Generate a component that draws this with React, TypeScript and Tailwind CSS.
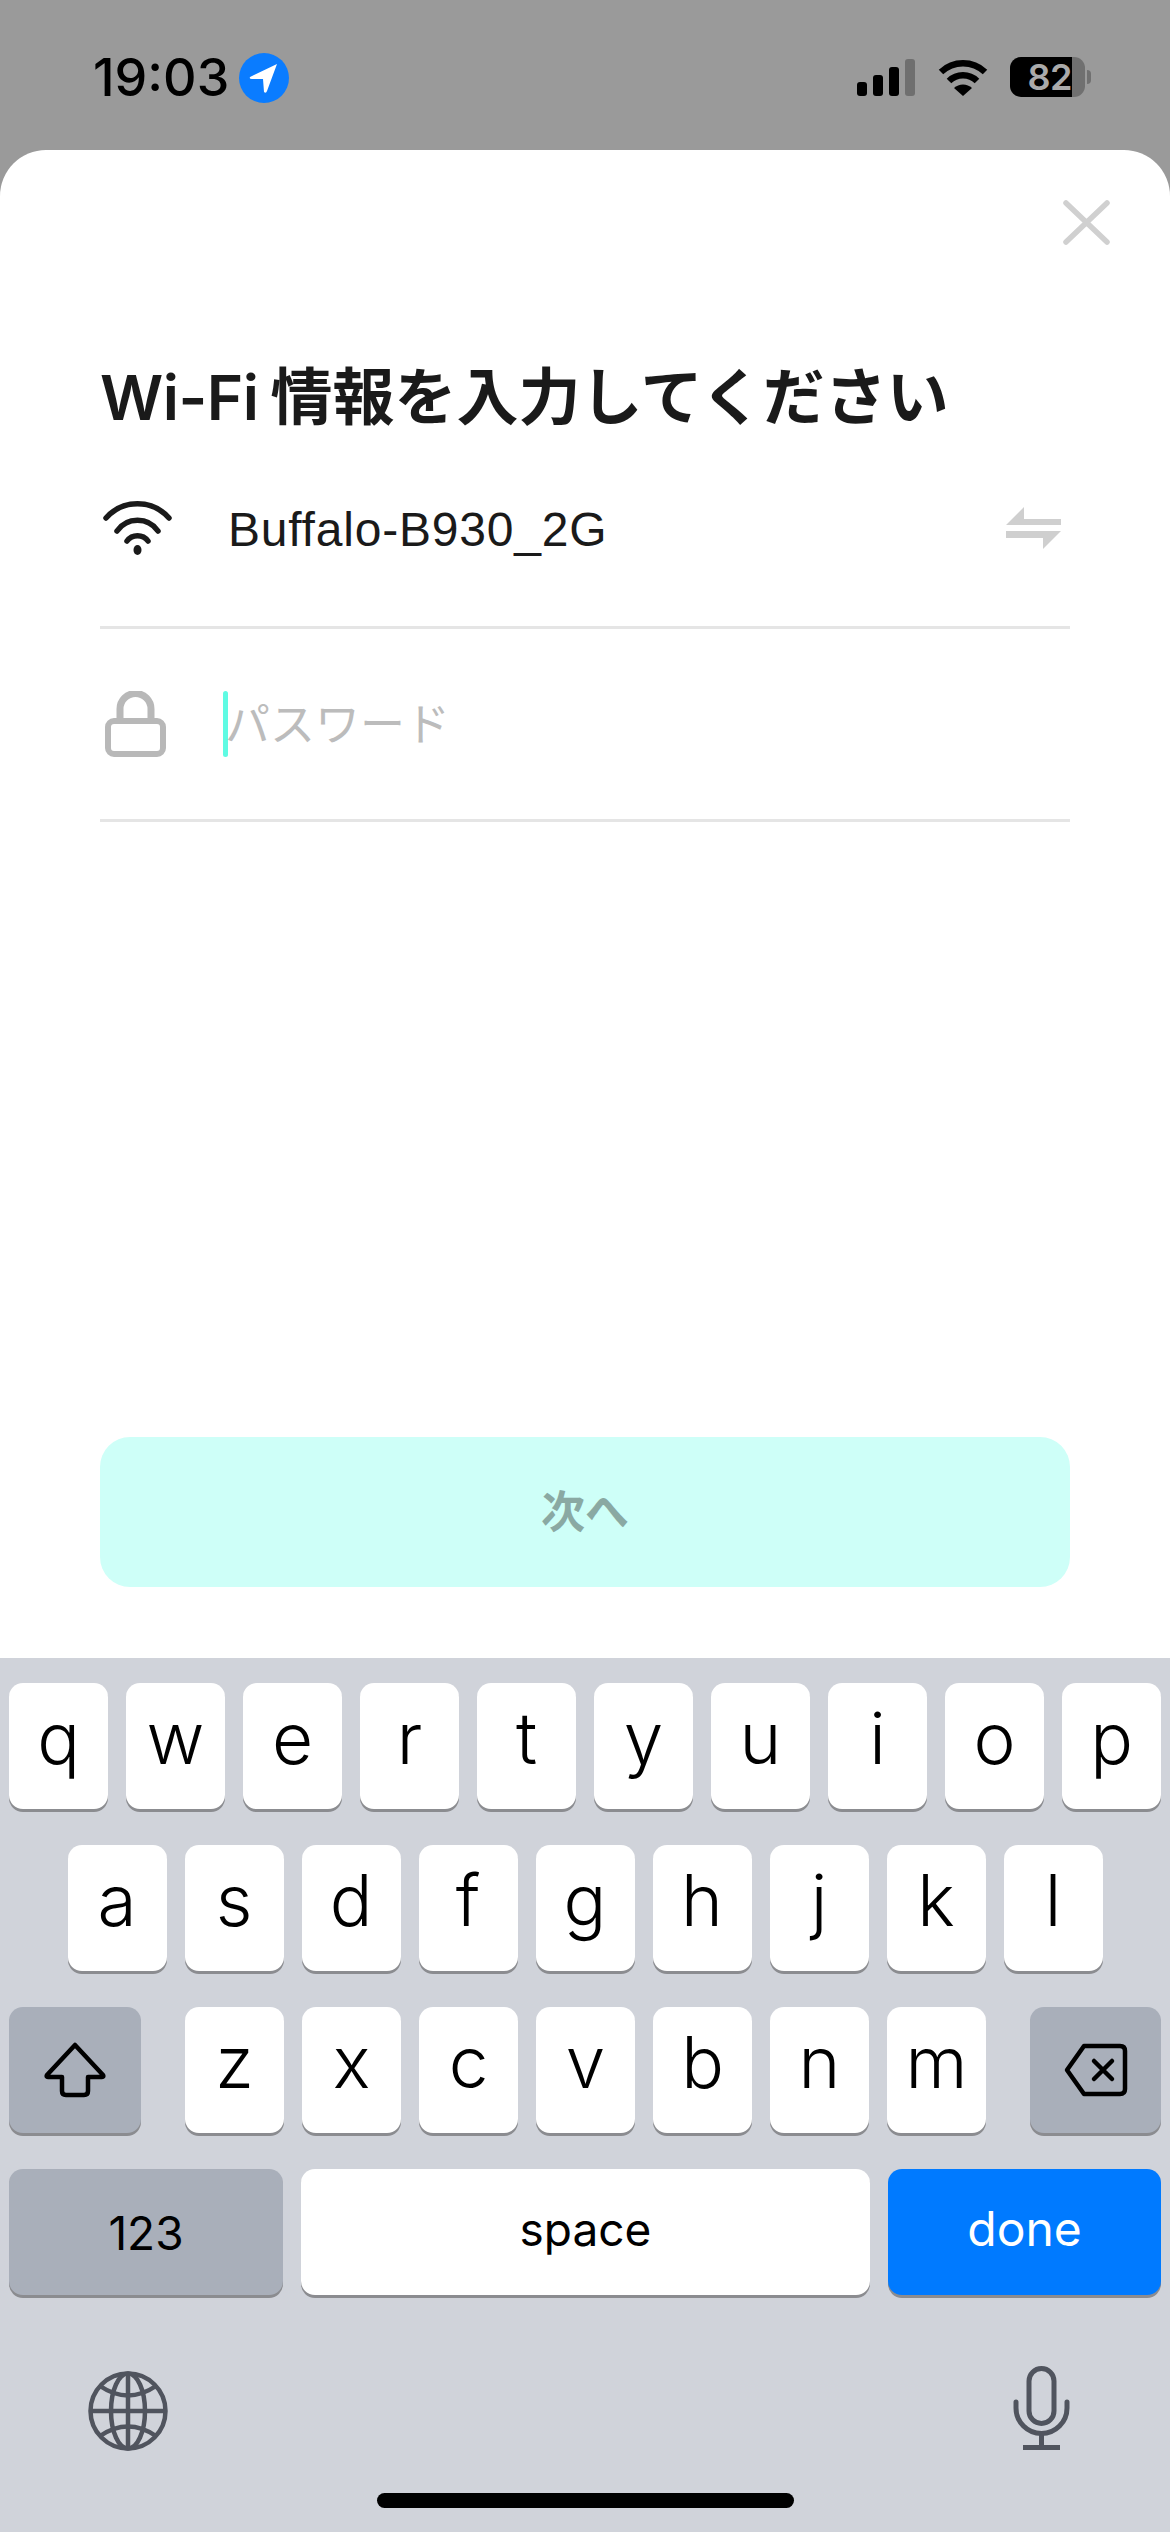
const sans = "font-['Inter','Noto_Sans_CJK_JP',sans-serif]";

const row1 = ["q", "w", "e", "r", "t", "y", "u", "i", "o", "p"];
const row2 = ["a", "s", "d", "f", "g", "h", "j", "k", "l"];
const row3 = ["z", "x", "c", "v", "b", "n", "m"];

function LetterKey({ label }: { label: string }) {
  return (
    <div className="flex h-[126px] w-[99px] items-center justify-center rounded-[14px] bg-white pb-[16px] text-[71px] leading-none font-light text-black shadow-[0_3px_0_#8b8c90]">
      {label}
    </div>
  );
}

function StatusBar() {
  return (
    <div className="flex h-[150px] items-start justify-between bg-[#9a9a9a] pt-[52px] pr-[79px] pl-[93px]">
      <div className="flex items-center gap-[10px]">
        <span className="text-[52px] leading-[52px] font-medium text-black">19:03</span>
        <svg width="50" height="52" viewBox="0 0 50 52">
          <circle cx="25" cy="26" r="25" fill="#0a7cff" />
          <path d="M38 12 L11 25 Q10 27 13 27 L24 27 L25 40 Q27 42 28 39 Z" fill="#fff" />
        </svg>
      </div>
      <div className="flex items-center pt-[5px]">
        <svg width="58" height="37" viewBox="0 0 58 37">
          <rect x="0" y="23" width="10" height="14" rx="3" fill="#000" />
          <rect x="16" y="16" width="10" height="21" rx="3" fill="#000" />
          <rect x="32" y="8" width="10" height="29" rx="3" fill="#000" />
          <rect x="48" y="0" width="10" height="37" rx="3" fill="#6f6f6f" />
        </svg>
        <svg className="ml-[23px]" width="50" height="37" viewBox="0 0 50 37">
          <path d="M3 13 A32 32 0 0 1 47 13" fill="none" stroke="#000" strokeWidth="6.5" />
          <path d="M11 22 A20 20 0 0 1 39 22" fill="none" stroke="#000" strokeWidth="6.5" />
          <path d="M25 37 L16 29 A13 13 0 0 1 34 29 Z" fill="#000" />
        </svg>
        <div className="ml-[22px] flex h-[40px] w-[75px]">
          <div className="flex w-[62px] items-center justify-end rounded-l-[11px] bg-black text-[36px] leading-none font-semibold tracking-[-0.5px] text-[#aaaaaa]">
            82
          </div>
          <div className="flex-1 rounded-r-[11px] bg-[#707070]" />
        </div>
        <div className="ml-[2px] h-[14px] w-[4px] rounded-r-full bg-[#707070]" />
      </div>
    </div>
  );
}

function Sheet() {
  return (
    <div className="flex h-[1508px] flex-col rounded-t-[46px] bg-white px-[100px]">
      <div className="-mr-[40px] flex justify-end pt-[50px]">
        <svg width="47" height="45" viewBox="0 0 47 45">
          <path d="M3 3 L44 42 M44 3 L3 42" stroke="#d0d0d0" strokeWidth="5.5" strokeLinecap="round" />
        </svg>
      </div>

      <h1 className="mt-[123px] h-[60px] text-[62px] leading-[60px] font-semibold whitespace-nowrap text-[#1a1a1a]">
        <span className="mr-[12px] tracking-[-0.5px]">Wi-Fi</span>情報を入力してください
      </h1>

      <div className="mt-[2px] flex h-[199px] items-center border-b-[3px] border-[#e5e5e5] pr-[9px] pl-[3px]">
        <svg width="69" height="54" viewBox="0 0 69 54">
          <path d="M3 17 A42 42 0 0 1 66 17" fill="none" stroke="#1a1a1a" strokeWidth="5.5" strokeLinecap="round" />
          <path d="M14 30 A25 25 0 0 1 55 30" fill="none" stroke="#1a1a1a" strokeWidth="5.5" strokeLinecap="round" />
          <path d="M24 40 A13 13 0 0 1 45 40" fill="none" stroke="#1a1a1a" strokeWidth="5.5" strokeLinecap="round" />
          <ellipse cx="34.5" cy="49" rx="4" ry="5" fill="#1a1a1a" />
        </svg>
        <span className="mt-[4px] ml-[56px] font-['Liberation_Sans',sans-serif] text-[48px] leading-none tracking-[0.8px] text-[#1a1a1a]">
          Buffalo-B930_2G
        </span>
        <svg className="ml-auto" width="55" height="42" viewBox="0 0 55 42">
          <path d="M0 18 L18 0 L18 12 L55 12 L55 18 Z" fill="#cfcfcf" />
          <path d="M0 24 L55 24 L37 42 L37 31 L0 31 Z" fill="#cfcfcf" />
        </svg>
      </div>

      <div className="flex h-[193px] items-center border-b-[3px] border-[#e5e5e5] pl-[5px]">
        <svg width="61" height="66" viewBox="0 0 61 66">
          <path d="M15 30 V18 A15.5 15.5 0 0 1 46 18 V30" fill="none" stroke="#b8b8b8" strokeWidth="7" />
          <rect x="3" y="30" width="55" height="33" rx="6" fill="none" stroke="#b8b8b8" strokeWidth="6" />
        </svg>
        <div className="ml-[57px] h-[66px] w-[5px] rounded-full bg-[#5ffbe3]" />
        <span className="-ml-[3px] text-[45px] leading-none font-normal whitespace-nowrap text-[#bcbcbc]">パスワード</span>
      </div>

      <div className="mt-auto mb-[71px] flex h-[150px] items-center justify-center rounded-[30px] bg-[#cefff8] text-[44px] leading-none font-semibold text-[#8aa9a3]">
        次へ
      </div>
    </div>
  );
}

function Keyboard() {
  return (
    <div className="flex h-[874px] flex-col bg-[#d0d3da] px-[9px] pt-[25px]">
      <div className="flex flex-col gap-[36px]">
        <div className="flex justify-between">
          {row1.map((k) => (
            <LetterKey key={k} label={k} />
          ))}
        </div>
        <div className="flex justify-center gap-[18px]">
          {row2.map((k) => (
            <LetterKey key={k} label={k} />
          ))}
        </div>
        <div className="flex justify-between">
          <div className="flex h-[126px] w-[132px] items-center justify-center rounded-[14px] bg-[#a9afba] shadow-[0_3px_0_#8b8c90]">
            <svg width="62" height="56" viewBox="0 0 62 56">
              <path
                d="M31 3 L59 33 Q60 35 58 35 H44 V49 Q44 53 40 53 H22 Q18 53 18 49 V35 H4 Q2 35 3 33 Z"
                fill="none"
                stroke="#000"
                strokeWidth="4.5"
                strokeLinejoin="round"
              />
            </svg>
          </div>
          <div className="flex gap-[18px]">
            {row3.map((k) => (
              <LetterKey key={k} label={k} />
            ))}
          </div>
          <div className="flex h-[126px] w-[131px] items-center justify-center rounded-[14px] bg-[#a9afba] shadow-[0_3px_0_#8b8c90]">
            <svg width="64" height="54" viewBox="0 0 64 54">
              <path
                d="M20 3 H56 Q61 3 61 8 V46 Q61 51 56 51 H20 L3 27 Z"
                fill="none"
                stroke="#000"
                strokeWidth="4.5"
                strokeLinejoin="round"
              />
              <path d="M30 18 L48 36 M48 18 L30 36" stroke="#000" strokeWidth="4.5" strokeLinecap="round" />
            </svg>
          </div>
        </div>
        <div className="flex gap-[18px]">
          <div className="flex h-[126px] w-[274px] items-center justify-center rounded-[14px] bg-[#a9afba] pt-[2px] text-[46px] leading-none text-black shadow-[0_3px_0_#8b8c90]">
            123
          </div>
          <div className="flex h-[126px] flex-1 items-center justify-center rounded-[14px] bg-white pb-[6px] text-[46px] leading-none text-black shadow-[0_3px_0_#8b8c90]">
            space
          </div>
          <div className="flex h-[126px] w-[273px] items-center justify-center rounded-[14px] bg-[#007aff] pb-[6px] text-[48px] leading-none text-white shadow-[0_3px_0_#8b8c90]">
            done
          </div>
        </div>
      </div>

      <div className="mt-[71px] flex items-start justify-between pr-[91px] pl-[79px]">
        <svg className="mt-[5px]" width="80" height="80" viewBox="0 0 80 80" fill="none" stroke="#50545e" strokeWidth="4.5">
          <circle cx="40" cy="40" r="37.5" />
          <ellipse cx="40" cy="40" rx="17" ry="37.5" />
          <path d="M40 3 V77 M3 40 H77" />
          <path d="M12 15 Q40 34 68 15 M12 65 Q40 46 68 65" />
        </svg>
        <svg width="57" height="84" viewBox="0 0 57 84" fill="none" stroke="#50545e" strokeWidth="5">
          <rect x="16" y="2.5" width="25" height="55" rx="12.5" />
          <path d="M3 36 V42 A25.5 25.5 0 0 0 54 42 V36" strokeLinecap="round" />
          <path d="M28.5 68 V81" />
          <path d="M10 81.5 H47" />
        </svg>
      </div>

      <div className="mt-auto mb-[24px] h-[15px] w-[417px] self-center rounded-full bg-black" />
    </div>
  );
}

export default function App() {
  return (
    <div className={`${sans} h-[2532px] w-[1170px] overflow-hidden bg-[#9a9a9a]`}>
      <StatusBar />
      <Sheet />
      <Keyboard />
    </div>
  );
}
